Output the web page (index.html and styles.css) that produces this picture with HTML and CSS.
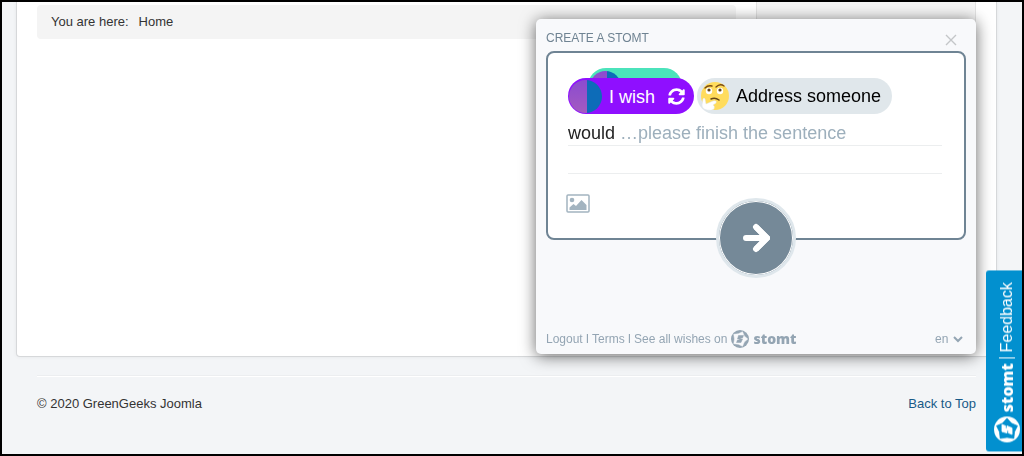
FILE: index.html
```html
<!DOCTYPE html>
<html lang="en">

<head>
  <meta charset="utf-8">
  <title>GreenGeeks Joomla</title>
  <link rel="stylesheet" href="styles.css">
</head>

<body>
  <svg class="sprite" aria-hidden="true">
    <symbol id="stomt-logo" viewBox="0 0 36 36">
      <circle cx="18" cy="18" r="18" fill="currentColor"/>
      <path class="logo-cut" d="M33.500 18 L26.500 24.200 L23 32.500 L14.800 28.500 L5.500 27.400 L7 18 L5.500 8.600 L14.800 7.500 L23 3.500 L26.500 11.800 Z" stroke-width="1" stroke-linejoin="round"/>
      <path d="M15 11 H25 L23 16 H20 L19 18 H23 L20 25 H11 L13 20 H16 L17 18 H13 Z" fill="currentColor" stroke="currentColor" stroke-width="1" stroke-linejoin="round"/>
    </symbol>
  </svg>

  <div class="container">
    <main>
      <nav class="breadcrumb">
        <span>You are here:</span>
        <span>Home</span>
      </nav>
    </main>
    <aside class="well"></aside>
  </div>

  <footer class="footer">
    <span>© 2020 GreenGeeks Joomla</span>
    <a href="#top">Back to Top</a>
  </footer>

  <section class="popup">
    <header class="popup-header">
      <h1>CREATE A STOMT</h1>
      <button type="button" class="close" aria-label="Close">
        <svg width="12" height="12" viewBox="0 0 12 12"><path d="M1 1 L11 11 M11 1 L1 11" stroke="#c4c6c8" stroke-width="1.4"/></svg>
      </button>
    </header>

    <form class="card">
      <div class="pills">
        <div class="switcher">
          <button type="button" class="pill pill-like" aria-label="Switch to like"><span class="avatar avatar-small"></span></button>
          <button type="button" class="pill pill-wish">
            <span class="avatar"></span>
            <span class="pill-text">I wish</span>
            <svg width="17" height="17" viewBox="0 0 512 512" fill="#fff"><path d="M370.700 133.300C339.500 104 298.900 88 255.800 88c-77.500.1-144.300 53.200-162.800 126.900-1.300 5.400-6.100 9.100-11.700 9.100H24.100c-7.500 0-13.200-6.800-11.800-14.200C33.900 94.900 134.800 8 256 8c66.400 0 126.800 26.100 171.300 68.700L463 41C478.100 25.900 504 36.600 504 57.900V192c0 13.300-10.700 24-24 24H345.900c-21.400 0-32.100-25.900-17-41zM32 296h134.100c21.400 0 32.100 25.900 17 41l-41.800 41.800c31.300 29.300 71.800 45.300 114.900 45.200 77.400-.1 144.300-53.100 162.800-126.800 1.300-5.400 6.100-9.200 11.700-9.200h57.300c7.500 0 13.200 6.800 11.800 14.200C478.100 417.100 377.200 504 256 504c-66.400 0-126.800-26.100-171.300-68.700L49 471c-15.100 15.100-41 4.400-41-16.900V320c0-13.300 10.700-24 24-24z"/></svg>
          </button>
        </div>
        <button type="button" class="pill pill-target">
          <svg width="30" height="32" viewBox="0 0 30 32">
            <circle cx="15" cy="16" r="14" fill="#ffdc5d"/>
            <path d="M5 8 Q8 5 12 6 M16 7 Q20 3 24 6" fill="none" stroke="#7a4a13" stroke-width="1.300" stroke-linecap="round"/>
            <circle cx="9" cy="11" r="3.200" fill="#fff"/>
            <circle cx="20" cy="11" r="3.200" fill="#fff"/>
            <circle cx="9" cy="10" r="1.600" fill="#65471b"/>
            <circle cx="20" cy="10" r="1.600" fill="#65471b"/>
            <path d="M11 19 Q15 17 19 20" fill="none" stroke="#65471b" stroke-width="1.500" stroke-linecap="round"/>
            <path d="M3 19 Q4 17 5 19 L6 24 L13 21 Q17 20 16 23 L13 25 Q15 26 14 29 Q11 31 7 30 Q2 29 2 25 Z" fill="#fff" stroke="#dfe6ea" stroke-width=".5"/>
          </svg>
          <span>Address someone</span>
        </button>
      </div>

      <div class="line">
        <label for="wish">would</label>
        <input type="text" id="wish" placeholder="…please finish the sentence">
      </div>
      <div class="line"></div>

      <button type="button" class="add-image" aria-label="Add an image">
        <svg width="24" height="20" viewBox="0 0 24 20">
          <rect x="1" y="1" width="22" height="17" rx="1" fill="none" stroke="#a3b4c0" stroke-width="1.500"/>
          <circle cx="6" cy="6" r="2.300" fill="#a3b4c0"/>
          <path d="M3.500 16 V13.500 L7.500 10 L10 12 L15.500 6 L20.500 11 V16 Z" fill="#a3b4c0"/>
        </svg>
      </button>

      <button type="submit" class="send" aria-label="Send">
        <svg width="28" height="30" viewBox="0 0 28 30"><path d="M4 15 H23 M14 4 L25 15 L14 26" fill="none" stroke="#fff" stroke-width="6"/><path d="M4 15 H23 M14 4 L25 15 L14 26" fill="none" stroke="#fff" stroke-width="6" stroke-linejoin="round" stroke-linecap="round"/></svg>
      </button>
    </form>

    <footer class="popup-footer">
      <a href="#logout">Logout</a> I <a href="#terms">Terms</a> I
      <a href="#wishes" class="wishes">See all wishes on
        <svg class="logo" width="18" height="18"><use href="#stomt-logo"/></svg>
        <b>stomt</b>
      </a>
      <label class="lang">
        <select aria-label="Language">
          <option>en</option>
        </select>
        <svg width="10" height="8" viewBox="0 0 10 8"><path d="M1 2 L5 6 L9 2" fill="none" stroke="#94a5b3" stroke-width="2"/></svg>
      </label>
    </footer>
  </section>

  <button type="button" class="feedback">
    <svg class="logo" width="26" height="26"><use href="#stomt-logo"/></svg>
    <b>stomt</b>
    <span class="divider"></span>
    <span>Feedback</span>
  </button>
</body>

</html>
```

FILE: styles.css
```css
*, *::before, *::after {
  box-sizing: border-box;
}
body {
  margin: 0;
  min-height: 100vh;
  padding: 0 25px 0 14px;
  border: 2px solid black;
  background: #f3f5f7;
  color: #333;
  font-size: 13px;
  line-height: 18px;
  font-family: "Liberation Sans", Arial, sans-serif;
}
button, input, select {
  font: inherit;
  color: inherit;
  border: none;
  background: none;
  padding: 0;
  margin: 0;
}
button {
  cursor: pointer;
}
a {
  color: inherit;
  text-decoration: none;
}
svg {
  display: block;
  flex: none;
}
.sprite {
  position: absolute;
  width: 0;
  height: 0;
}

/* page */
.container {
  display: grid;
  grid-template-columns: 1fr 220px;
  gap: 20px;
  min-height: 355px;
  padding: 0 20px;
  background: white;
  border: 1px solid #d6d8da;
  border-top: none;
  border-radius: 0 0 4px 4px;
  box-shadow: 0 0 4px rgba(0, 0, 0, 0.06);
}
.breadcrumb {
  display: flex;
  gap: 10px;
  margin-top: 3px;
  padding: 8px 14px;
  background: #f4f4f4;
  border-radius: 4px;
}
.well {
  height: 200px;
  background: #f5f5f5;
  border: 1px solid #e3e3e3;
  border-top: none;
  border-radius: 0 0 4px 4px;
}
.footer {
  display: flex;
  justify-content: space-between;
  margin: 18px 21px 0;
  padding-top: 19px;
  border-top: 1px solid #eceef0;
  box-shadow: inset 0 1px white;
}
.footer a {
  color: #185a88;
}

/* popup */
.popup {
  position: fixed;
  top: 19px;
  right: 48px;
  width: 440px;
  padding: 10px 10px 6px;
  background: #f8f9fb;
  border-radius: 5px;
  box-shadow: 0 2px 16px rgba(0, 0, 0, 0.6);
}
.popup-header {
  display: flex;
  justify-content: space-between;
  height: 22px;
}
.popup-header h1 {
  margin: 0;
  color: #6f8392;
  font-size: 12px;
  font-weight: normal;
}
.close {
  padding: 0 9px;
}
.card {
  position: relative;
  min-height: 189px;
  padding: 25px 22px 24px 20px;
  background: white;
  border: 2px solid #6f8494;
  border-radius: 8px;
}
.pills {
  display: flex;
  gap: 3px;
}
.switcher {
  position: relative;
}
.pill {
  display: flex;
  align-items: center;
  height: 36px;
  border-radius: 18px;
  font-size: 18px;
}
.pill-like {
  position: absolute;
  top: -10px;
  left: 20px;
  width: 94px;
  padding: 0 2px;
  background: #4be3bb;
}
.pill-wish {
  position: relative;
  gap: 7px;
  width: 126px;
  padding: 0 9px 0 1px;
  background: #8f0fff;
  color: white;
}
.pill-text {
  flex: 1;
  padding-top: 2px;
  text-align: left;
}
.avatar {
  width: 33px;
  height: 33px;
  border-radius: 50%;
  background: linear-gradient(90deg, transparent 55%, #0d6cb8 55%), linear-gradient(#8b4bd0, #a45bc0);
}
.avatar-small {
  width: 31px;
  height: 31px;
}
.pill-target {
  gap: 6px;
  padding: 0 11px 0 3px;
  background: #e0e7eb;
  color: black;
}
.line {
  display: flex;
  gap: 5px;
  height: 28px;
  border-bottom: 1px solid #eceeef;
  color: #222;
  font-size: 18px;
}
.pills + .line {
  height: 32px;
  padding-top: 6px;
}
.line label {
  line-height: 26px;
}
.line input {
  flex: 1;
  min-width: 0;
  height: 26px;
  outline: none;
}
.line input::placeholder {
  color: #9dafbc;
  opacity: 1;
}
.add-image {
  display: block;
  margin: 20px 0 0 -2px;
}
.send {
  position: absolute;
  left: 50%;
  bottom: -40px;
  display: flex;
  align-items: center;
  justify-content: center;
  width: 80px;
  height: 80px;
  margin-left: -40px;
  background: #758998;
  border: 3px solid #dfe7ec;
  border-radius: 50%;
  box-shadow: inset 0 0 0 1px white;
}
.popup-footer {
  display: flex;
  align-items: center;
  gap: 3px;
  margin-top: 90px;
  color: #94a5b3;
  font-size: 12px;
}
.wishes {
  display: flex;
  align-items: center;
  gap: 4px;
}
.wishes b, .feedback b {
  font-family: "Open Sans", sans-serif;
  font-size: 14px;
  font-weight: 800;
}
.logo-cut {
  fill: var(--cut);
  stroke: var(--cut);
}
.wishes .logo {
  --cut: #f8f9fb;
}
.lang {
  display: flex;
  align-items: center;
  gap: 4px;
  margin: 0 3px 0 auto;
}
.lang select {
  appearance: none;
}

/* feedback tab */
.feedback {
  position: fixed;
  right: 2px;
  bottom: 5px;
  display: flex;
  align-items: center;
  gap: 4px;
  width: 36px;
  padding: 9px 8px 12px 2px;
  background: #0290cf;
  border-radius: 0 3px 3px 0;
  color: white;
  font-size: 16px;
  writing-mode: vertical-rl;
  transform: rotate(180deg);
}
.feedback .logo {
  --cut: #0290cf;
  transform: rotate(90deg);
}
.feedback b {
  font-size: 16px;
}
.divider {
  width: 16px;
  height: 1px;
  margin: 1px 0;
  background: white;
}
```
